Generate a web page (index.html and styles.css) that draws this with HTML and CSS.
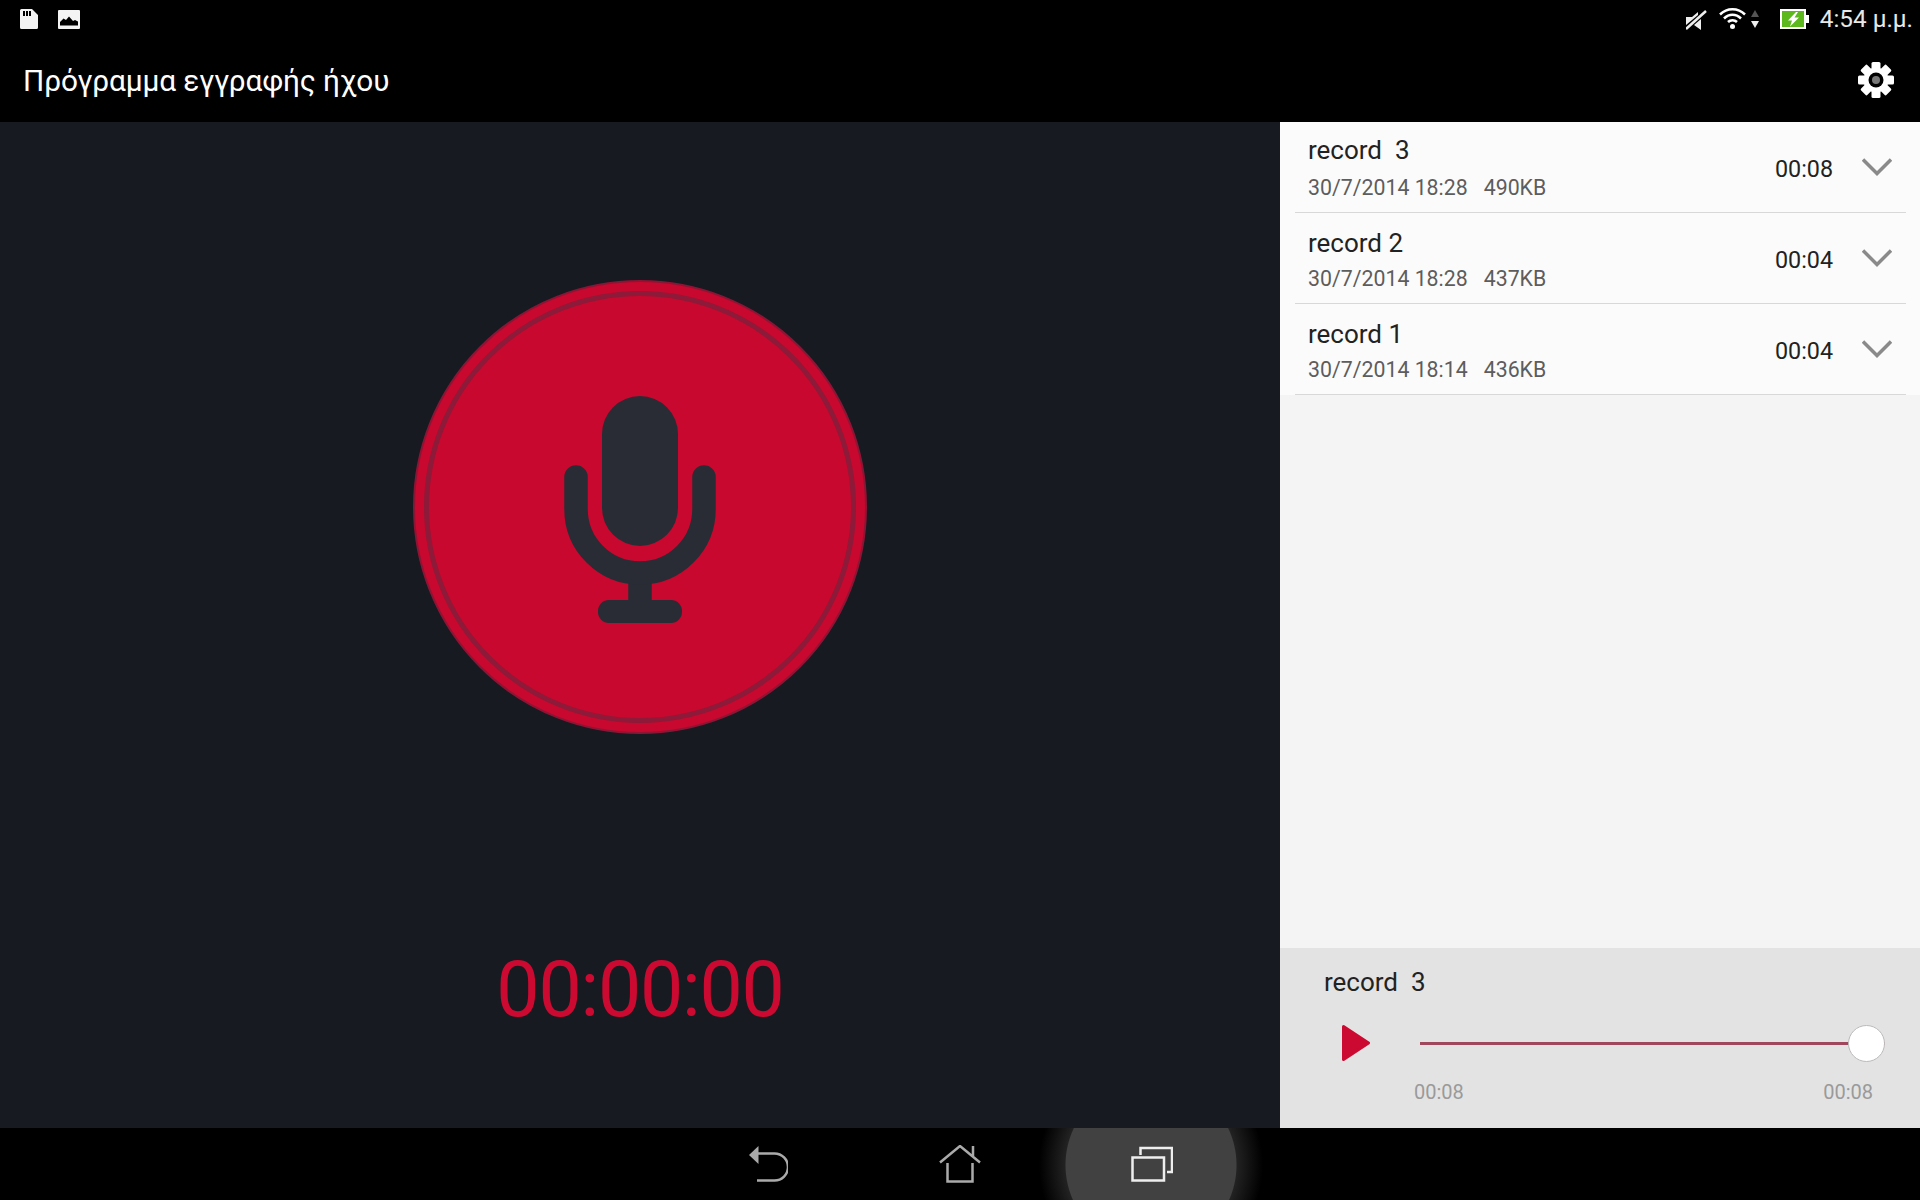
FILE: index.html
```html
<!DOCTYPE html>
<html lang="el">
<head>
<meta charset="utf-8">
<title>Πρόγραμμα εγγραφής ήχου</title>
<link rel="stylesheet" href="styles.css">
</head>
<body>
<div class="app">
  <header class="status-bar">
    <div class="status-left">
      <svg class="ic-sd" width="18" height="20" viewBox="0 0 18 20"><path fill="#f4f4f4" fill-rule="evenodd" d="M1.5 0H12L18 6V18.5A1.5 1.5 0 0 1 16.500 20H1.500A1.500 1.500 0 0 1 0 18.500V1.500A1.500 1.500 0 0 1 1.500 0ZM3 2V7H5V2ZM6 2V7H8V2ZM9 2V7H11V2Z"/></svg>
      <svg class="ic-img" width="22" height="19" viewBox="0 0 22 19"><path fill="#f4f4f4" fill-rule="evenodd" d="M1 0H21A1 1 0 0 1 22 1V18A1 1 0 0 1 21 19H1A1 1 0 0 1 0 18V1A1 1 0 0 1 1 0ZM2 15.500H20V11.500L17 10 15 11 11 6.500 8 10 5.500 8.500 2 12Z"/></svg>
    </div>
    <div class="status-right">
      <svg class="ic-mute" width="21" height="20" viewBox="0 0 21 20"><path fill="#eee" d="M0 7H6L12 2V5L0 15ZM8 15 15 9V20Z"/><path stroke="#eee" stroke-width="2.500" d="M0 19 20 1"/></svg>
      <svg class="ic-wifi" width="27" height="22" viewBox="0 0 27 22"><g fill="none" stroke="#fff" stroke-width="2.500"><path d="M1 7.500C8 .5 19 .5 26 7.500"/><path d="M5 11.500C10 6.500 17 6.500 22 11.500"/><path d="M9 15C11.500 12.500 15.500 12.500 18 15"/></g><circle cx="13.500" cy="19.500" r="2.500" fill="#fff"/></svg>
      <svg class="ic-arrows" width="8" height="18" viewBox="0 0 8 18"><path fill="#555" d="M4 0 8 7H0Z"/><path fill="#eee" d="M0 11H8L4 18Z"/></svg>
      <svg class="ic-batt" width="29" height="20" viewBox="0 0 29 20"><rect x="1" y="1" width="24" height="18" fill="#5cb81c" stroke="#fff" stroke-width="2"/><rect x="26" y="6" width="3" height="8" fill="#fff"/><path fill="#fff" d="M16 3 8 11.500H12L10 17.500 19 8.500H14.500L18 3Z"/></svg>
      <span class="clock">4:54 μ.μ.</span>
    </div>
  </header>
  <div class="action-bar">
    <h1 class="title">Πρόγραμμα εγγραφής ήχου</h1>
    <svg class="ic-gear" width="36" height="36" viewBox="0 0 36 36">
      <g fill="#fff">
        <rect x="13.500" y="0" width="9" height="36" rx="1.500"/>
        <rect x="13.500" y="0" width="9" height="36" rx="1.500" transform="rotate(45 18 18)"/>
        <rect x="13.500" y="0" width="9" height="36" rx="1.500" transform="rotate(90 18 18)"/>
        <rect x="13.500" y="0" width="9" height="36" rx="1.500" transform="rotate(135 18 18)"/>
        <circle cx="18" cy="18" r="12.500"/>
      </g>
      <circle cx="18" cy="18" r="7.500" fill="#000"/>
      <circle cx="18" cy="18" r="4" fill="#777"/>
    </svg>
  </div>
  <main class="main">
    <section class="recorder">
      <div class="rec-button">
        <div class="rec-ring">
          <svg class="mic" width="160" height="232" viewBox="0 0 160 232">
            <g fill="#292c34">
              <rect x="42" y="0" width="76" height="150" rx="38"/>
              <path d="M80 210V177" stroke="#292c34" stroke-width="23.500"/>
              <rect x="38" y="204" width="84" height="23" rx="11"/>
            </g>
            <path fill="none" stroke="#292c34" stroke-width="23.500" stroke-linecap="round" d="M16 81V113A64 64 0 0 0 144 113V81"/>
          </svg>
        </div>
      </div>
      <div class="timer">00:00:00</div>
    </section>
    <aside class="side">
      <ul class="list">
        <li class="row row-first">
          <div class="row-text"><div class="name">record  3</div><div class="meta"><span>30/7/2014 18:28</span><span>490KB</span></div></div>
          <span class="dur">00:08</span>
          <svg class="chev" width="30" height="18" viewBox="0 0 30 18"><path fill="none" stroke="#8a8a8a" stroke-width="3.500" d="M1 1.500 15 15.500 29 1.500"/></svg>
        </li>
        <li class="row">
          <div class="row-text"><div class="name">record 2</div><div class="meta"><span>30/7/2014 18:28</span><span>437KB</span></div></div>
          <span class="dur">00:04</span>
          <svg class="chev" width="30" height="18" viewBox="0 0 30 18"><path fill="none" stroke="#8a8a8a" stroke-width="3.500" d="M1 1.500 15 15.500 29 1.500"/></svg>
        </li>
        <li class="row">
          <div class="row-text"><div class="name">record 1</div><div class="meta"><span>30/7/2014 18:14</span><span>436KB</span></div></div>
          <span class="dur">00:04</span>
          <svg class="chev" width="30" height="18" viewBox="0 0 30 18"><path fill="none" stroke="#8a8a8a" stroke-width="3.500" d="M1 1.500 15 15.500 29 1.500"/></svg>
        </li>
      </ul>
      <div class="player">
        <div class="player-name">record  3</div>
        <div class="player-controls">
          <svg class="play" width="28" height="36" viewBox="0 0 28 36"><path fill="#cc0a31" stroke="#cc0a31" stroke-width="3" stroke-linejoin="round" d="M1.500 1.500 26.500 18 1.500 34.500Z"/></svg>
          <div class="track"><div class="thumb"></div></div>
        </div>
        <div class="player-times"><span>00:08</span><span>00:08</span></div>
      </div>
    </aside>
  </main>
  <nav class="nav">
    <div class="nav-btn">
      <svg width="39" height="36" viewBox="0 0 39 36"><path fill="#aaa" d="M0 9 9.500 0V18Z"/><path fill="none" stroke="#aaa" stroke-width="2.500" d="M8 7.500H25.500A13.500 13.500 0 0 1 25.500 34.500H8"/></svg>
    </div>
    <div class="nav-btn">
      <svg width="42" height="38" viewBox="0 0 42 38"><path fill="none" stroke="#aaa" stroke-width="2.500" d="M1 17.500 21 1 41 17.500M34 1V11.500M8.500 18V36.500H33.500V18"/></svg>
    </div>
    <div class="nav-btn">
      <svg width="42" height="36" viewBox="0 0 42 36"><path fill="none" stroke="#eee" stroke-width="2.500" d="M1.500 11.500H33V34.500H1.500ZM9.500 9V2H41V26H36"/></svg>
    </div>
  </nav>
</div>
</body>
</html>
```
FILE: styles.css
```css
* { box-sizing: border-box; }
html, body { margin: 0; padding: 0; }
body { background: #000; font-family: Roboto, "Noto Sans", sans-serif; }
svg { display: block; flex: none; }
.app { width: 1920px; height: 1200px; display: flex; flex-direction: column; overflow: hidden; }

.status-bar { height: 38px; flex: none; background: #000; display: flex; justify-content: space-between; align-items: flex-start; }
.status-left { display: flex; padding: 9px 0 0 20px; }
.ic-img { margin: 1px 0 0 20px; }
.status-right { display: flex; align-items: flex-start; padding: 0 7px 0 0; }
.ic-mute { margin-top: 10px; }
.ic-wifi { margin: 7px 0 0 12px; }
.ic-arrows { margin: 10px 0 0 5px; }
.ic-batt { margin: 9px 0 0 21px; }
.clock { color: #e8e8e8; font-size: 24.300px; line-height: 38px; margin-left: 11px; }

.action-bar { height: 84px; flex: none; background: #000; display: flex; align-items: center; justify-content: space-between; padding: 0 26px 0 23px; }
.title { margin: 2px 0 0; color: #fff; font-size: 29.800px; font-weight: 400; line-height: 80px; letter-spacing: -.1px; }

.main { flex: 1; display: flex; min-height: 0; }
.recorder { width: 1280px; flex: none; background: #171a20; display: flex; flex-direction: column; align-items: center; padding-top: 158px; }
.rec-button { width: 454px; height: 454px; border-radius: 50%; background: #c8082e; border: 2px solid #8c1535; padding: 9px; }
.rec-ring { width: 100%; height: 100%; border-radius: 50%; border: 5px solid #8c1a38; display: flex; align-items: center; justify-content: center; }
.mic { margin-top: 10px; }
.timer { color: #cc0a31; font-size: 77px; letter-spacing: -1.200px; line-height: 90px; margin-top: 211px; }

.side { flex: 1; display: flex; flex-direction: column; background: #f4f4f4; }
.list { list-style: none; margin: 0; padding: 0; flex: 1; }
.row { height: 91px; background: #fbfbfb; display: flex; align-items: center; padding: 0 28px 0 28px; position: relative; }
.row::after { content: ""; position: absolute; left: 15px; right: 14px; bottom: 0; height: 1px; background: #d8d8d8; }
.row-text { flex: 1; padding-top: 1px; }
.name { font-size: 26px; line-height: 32px; color: #222; white-space: pre; }
.row-first .name { transform: translateY(-2px); }
.meta { font-size: 21.300px; line-height: 26px; margin-top: 7px; color: #5d5d5d; display: flex; gap: 16px; }
.dur { font-size: 23.300px; color: #222; margin-right: 29px; padding-top: 2px; }
.chev { margin-bottom: 2px; }

.player { height: 180px; flex: none; background: #e3e3e3; padding: 18px 35px 0 44px; }
.player-name { font-size: 26px; line-height: 32px; color: #222; white-space: pre; }
.player-controls { display: flex; align-items: center; height: 38px; margin-top: 26px; }
.play { margin-left: 18px; }
.track { flex: 1; height: 3px; margin-left: 50px; background: #a0475d; display: flex; align-items: center; justify-content: flex-end; }
.thumb { width: 37px; height: 37px; flex: none; border-radius: 50%; background: #fff; border: 1px solid #bbb; }
.player-times { display: flex; justify-content: space-between; font-size: 20px; line-height: 24px; color: #9a9a9a; margin: 18px 12px 0 90px; }

.nav { height: 72px; flex: none; display: flex; justify-content: center; background: radial-gradient(circle at 1151px 37px, #414141 85px, #222 86px, #000 112px); }
.nav-btn { width: 192px; display: flex; align-items: center; justify-content: center; }
```
